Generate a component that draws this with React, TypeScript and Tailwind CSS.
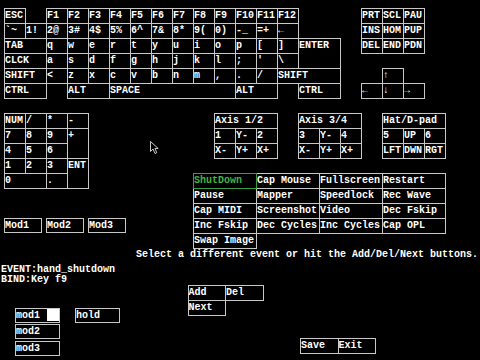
import React from 'react';

// DOSBox keymapper screen, 640x480 layout drawn at 0.75 scale:
// one key unit = 21px wide, 15px tall. Boxes are 1px larger and pull
// back with a negative margin so neighbouring outlines share one line.

const line = 'box-border border border-[#c8c8c8]';

type KeyProps = { t?: string; w?: string; extra?: string };

const Key: React.FC<KeyProps> = ({ t, w = 'w-[22px]', extra = '' }) => (
    <div className={`${line} ${w} h-[16px] -mr-px -mb-px leading-[13px] whitespace-nowrap overflow-hidden shrink-0 ${extra}`}>
        {t}
    </div>
);

const Gap: React.FC<{ w?: string }> = ({ w = 'w-[21px]' }) => <div className={`${w} h-[15px] shrink-0`} />;

// grid cell, stretched over its area (+1px through the negative margins)
const Cell: React.FC<{ t?: string; extra?: string }> = ({ t, extra = '' }) => (
    <div className={`${line} -mr-px -mb-px leading-[13px] whitespace-nowrap overflow-hidden ${extra}`}>{t}</div>
);

const Btn: React.FC<{ t: string; w?: string; children?: React.ReactNode }> = ({ t, w = 'w-[38.5px]', children }) => (
    <div className={`${line} ${w} h-[16px] -mr-px -mb-px leading-[13px] whitespace-nowrap flex items-start shrink-0`}>
        <span>{t}</span>
        {children}
    </div>
);

const fKeys = ['F1', 'F2', 'F3', 'F4', 'F5', 'F6', 'F7', 'F8', 'F9', 'F10', 'F11', 'F12'];
const numRow = ['`~', '1!', '2@', '3#', '4$', '5%', '6^', '7&', '8*', '9(', '0)', '-_', '=+', '←'];
const qRow = ['q', 'w', 'e', 'r', 't', 'y', 'u', 'i', 'o', 'p', '[', ']'];
const aRow = ['a', 's', 'd', 'f', 'g', 'h', 'j', 'k', 'l', ';', "'", '\\'];
const zRow = ['<', 'z', 'x', 'c', 'v', 'b', 'n', 'm', ',', '.', '/'];

const navKeys = ['PRT', 'SCL', 'PAU', 'INS', 'HOM', 'PUP', 'DEL', 'END', 'PDN'];

const joysticks = [
    { title: 'Axis 1/2', keys: ['1', 'Y-', '2', 'X-', 'Y+', 'X+'] },
    { title: 'Axis 3/4', keys: ['3', 'Y-', '4', 'X-', 'Y+', 'X+'] },
    { title: 'Hat/D-pad', keys: ['5', 'UP', '6', 'LFT', 'DWN', 'RGT'] },
];

const handlers = [
    'Cap Mouse', 'Fullscreen', 'Restart',
    'Pause', 'Mapper', 'Speedlock', 'Rec Wave',
    'Cap MIDI', 'Screenshot', 'Video', 'Dec Fskip',
    'Inc Fskip', 'Dec Cycles', 'Inc Cycles', 'Cap OPL',
    'Swap Image',
];

export default function App() {
    return (
        <div className="relative w-[480px] h-[360px] bg-black overflow-hidden text-white text-[10px] font-bold font-['Liberation_Mono','DejaVu_Sans_Mono',monospace]">
            {/* KEYBOARD */}
            <div className="flex pl-[4px] pt-[8px]">
                <div className="flex flex-col">
                    <div className="flex">
                        <Key t="ESC" />
                        <Gap />
                        {fKeys.map(k => <Key key={k} t={k} />)}
                    </div>
                    <div className="flex">
                        {numRow.map(k => <Key key={k} t={k} />)}
                    </div>
                    <div className="flex">
                        <div className="flex flex-col">
                            <div className="flex">
                                <Key t="TAB" w="w-[43px]" />
                                {qRow.map(k => <Key key={k} t={k} />)}
                            </div>
                            <div className="flex">
                                <Key t="CLCK" w="w-[43px]" />
                                {aRow.map(k => <Key key={k} t={k} />)}
                            </div>
                        </div>
                        <Key t="ENTER" w="w-[43px]" extra="h-[31px]" />
                    </div>
                    <div className="flex">
                        <Key t="SHIFT" w="w-[43px]" />
                        {zRow.map(k => <Key key={k} t={k} />)}
                        <Key t="SHIFT" w="w-[64px]" />
                    </div>
                    <div className="flex">
                        <Key t="CTRL" w="w-[43px]" />
                        <Gap />
                        <Key t="ALT" w="w-[43px]" />
                        <Key t="SPACE" w="w-[127px]" />
                        <Key t="ALT" w="w-[43px]" />
                        <Gap />
                        <Key t="CTRL" w="w-[43px]" />
                    </div>
                </div>

                <Gap />

                {/* nav cluster + arrows */}
                <div className="flex flex-col">
                    <div className="grid grid-cols-[repeat(3,21px)] auto-rows-[15px]">
                        {navKeys.map(k => <Cell key={k} t={k} />)}
                    </div>
                    <div className="flex mt-[15px]">
                        <Gap />
                        <Key t="↑" />
                    </div>
                    <div className="flex">
                        <Key t="←" />
                        <Key t="↓" />
                        <Key t="→" />
                    </div>
                </div>
            </div>

            {/* KEYPAD, JOYSTICKS, HANDLERS */}
            <div className="flex items-start pl-[4px] mt-[15px]">
                <div className="w-[189px] flex flex-col shrink-0">
                    <div className="grid grid-cols-[repeat(4,21px)] auto-rows-[15px] w-[84px]">
                        <Cell t="NUM" />
                        <Cell t="/" />
                        <Cell t="*" />
                        <Cell t="-" />
                        <Cell t="7" />
                        <Cell t="8" />
                        <Cell t="9" />
                        <Cell t="+" extra="row-span-2" />
                        <Cell t="4" />
                        <Cell t="5" />
                        <Cell t="6" />
                        <Cell t="1" />
                        <Cell t="2" />
                        <Cell t="3" />
                        <Cell t="ENT" extra="row-span-2" />
                        <Cell t="0" extra="col-span-2" />
                        <Cell t="." />
                    </div>
                    <div className="flex gap-[4px] mt-[30px]">
                        {['Mod1', 'Mod2', 'Mod3'].map(m => (
                            <div key={m} className={`${line} w-[38px] h-[15px] leading-[13px]`}>{m}</div>
                        ))}
                    </div>
                </div>

                <div className="flex flex-col">
                    <div className="flex gap-[21px] pl-[21px]">
                        {joysticks.map(j => (
                            <div key={j.title} className="grid grid-cols-[repeat(3,21px)] auto-rows-[15px]">
                                <Cell t={j.title} extra="col-span-3" />
                                {j.keys.map((k, i) => <Cell key={i} t={k} />)}
                            </div>
                        ))}
                    </div>
                    <div className="grid grid-cols-[repeat(4,63px)] auto-rows-[15px] mt-[15px]">
                        <div className="relative z-10 box-border border border-[#3c9c3c] -mr-px -mb-px leading-[13px] text-[#46b446] whitespace-nowrap">
                            ShutDown
                        </div>
                        {handlers.map(h => <Cell key={h} t={h} />)}
                    </div>
                </div>
            </div>

            {/* BINDING AREA */}
            <div className="h-[13px] leading-[13px] pl-[136px] whitespace-nowrap">
                Select a different event or hit the Add/Del/Next buttons.
            </div>
            <div className="mt-[3px] leading-[11px] pl-px">EVENT:hand_shutdown</div>
            <div className="h-[10px] leading-[10px] pl-px">BIND:Key f9</div>

            <div className="flex items-start pl-[15px]">
                <div className="w-[105px] mt-[22.5px] flex flex-col gap-[1.5px]">
                    <div className="flex gap-[15px]">
                        <div className={`${line} w-[45px] h-[15px] leading-[13px] flex items-start`}>
                            <span>mod1</span>
                            <div className="ml-auto mr-[0.5px] mt-[0.5px] w-[12px] h-[12px] bg-white" />
                        </div>
                        <div className={`${line} w-[45px] h-[15px] leading-[13px]`}>hold</div>
                    </div>
                    <div className={`${line} w-[45px] h-[15px] leading-[13px]`}>mod2</div>
                    <div className={`${line} w-[45px] h-[15px] leading-[13px]`}>mod3</div>
                </div>

                <div className="ml-[67.5px] flex flex-col">
                    <div className="flex">
                        <Btn t="Add" />
                        <Btn t="Del" />
                    </div>
                    <Btn t="Next" />
                </div>

                <div className="ml-[37.5px] mt-[52.5px] flex">
                    <Btn t="Save" />
                    <Btn t="Exit" />
                </div>
            </div>

            {/* mouse pointer */}
            <svg className="absolute left-[150px] top-[141px]" width="10" height="14" viewBox="0 0 10 14">
                <polygon points="0.5,0.5 0.5,10.5 3,8 5,12.5 6.8,11.7 4.9,7.5 8.2,7.5" fill="#000" stroke="#c8c8c8" strokeWidth="1" />
            </svg>
        </div>
    );
}
